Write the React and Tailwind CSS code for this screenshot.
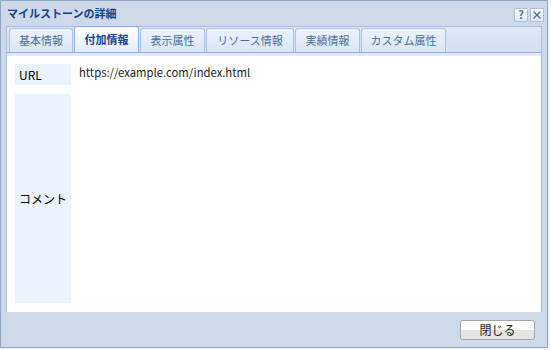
import React from "react";

const jp = { fontFamily: '"Noto Sans CJK JP", "Noto Sans", sans-serif' };

const tabs = [
  { label: "基本情報", w: "w-[64px]" },
  { label: "付加情報", w: "w-[65px]" },
  { label: "表示属性", w: "w-[65px]" },
  { label: "リソース情報", w: "w-[88px]" },
  { label: "実績情報", w: "w-[65px]" },
  { label: "カスタム属性", w: "w-[85px]" },
];

const App = () => {
  return (
    <div className="w-[551px] h-[350px] bg-[#f4f6f9]" style={jp}>
      <div className="w-[548px] h-[348px] border border-[#8ea6c4] bg-[#cdd9e8] flex flex-col">
        {/* header */}
        <div className="h-[25px] flex items-center justify-between pl-[6px] pr-[3px]">
          <span className="text-[11px] font-bold text-[#15428b] leading-none">マイルストーンの詳細</span>
          <div className="flex gap-[2px] mt-[2px]">
            <button className="w-[14px] h-[14px] rounded-[2px] border border-[#a9bfd9] bg-gradient-to-b from-white to-[#dfe8f4] flex items-center justify-center text-[11px] font-bold text-[#4f6f99] leading-none">
              ?
            </button>
            <button className="w-[14px] h-[14px] rounded-[2px] border border-[#a9bfd9] bg-gradient-to-b from-white to-[#dfe8f4] flex items-center justify-center">
              <svg width="10" height="10" viewBox="0 0 10 10">
                <path d="M1.5 1.5 L8.5 8.5 M8.5 1.5 L1.5 8.5" stroke="#4f6f99" strokeWidth="1.4" />
              </svg>
            </button>
          </div>
        </div>

        <div className="flex-1 flex flex-col px-[5px]">
          {/* tab strip */}
          <div className="h-[26px] flex items-end gap-[1px] pl-[2px] border border-b-0 border-[#a9bfd9] bg-gradient-to-b from-[#dde7f4] to-[#d4e0f0]">
            {tabs.map((t, i) =>
              i === 1 ? (
                <div
                  key={t.label}
                  className={`${t.w} h-[26px] flex items-center justify-center rounded-t-[3px] border border-b-0 border-[#8db2e3] bg-gradient-to-b from-white to-[#e2edfb] text-[11px] font-bold text-[#15428b]`}
                >
                  {t.label}
                </div>
              ) : (
                <div
                  key={t.label}
                  className={`${t.w} h-[24px] flex items-center justify-center rounded-t-[3px] border border-b-0 border-[#a9c3e6] bg-gradient-to-b from-[#edf3fb] to-[#d9e5f4] text-[11px] text-[#4a6d9c]`}
                >
                  {t.label}
                </div>
              )
            )}
          </div>
          <div className="h-[4px] bg-[#dfe9f7] border-t border-[#8db2e3] border-x border-x-[#a9bfd9]"></div>

          {/* panel */}
          <div className="h-[256px] bg-white border-x border-[#a9bfd9] px-[8px] pt-[8px] pb-[9px] flex flex-col gap-[9px]">
            <div className="flex gap-[8px]">
              <div className="w-[56px] h-[21px] shrink-0 bg-[#ebf3fe] flex items-center pl-[4px] text-[12px] text-black">URL</div>
              <div className="text-[11.3px] text-[#222] leading-[14px] pt-[1px]">https://example.com/index.html</div>
            </div>
            <div className="flex gap-[8px] flex-1">
              <div className="w-[56px] shrink-0 bg-[#ebf3fe] flex items-center pl-[4px] text-[12px] text-black">コメント</div>
              <div className="flex-1"></div>
            </div>
          </div>

          {/* footer */}
          <div className="flex-1 flex justify-end items-start pt-[8px] pr-[7px]">
            <button className="w-[75px] h-[20px] rounded-[3px] border border-[#a6a6a6] bg-gradient-to-b from-white from-50% to-[#e4e4e4] to-50% text-[12px] text-[#222] leading-none">
              閉じる
            </button>
          </div>
        </div>
      </div>
    </div>
  );
};

export default App;
